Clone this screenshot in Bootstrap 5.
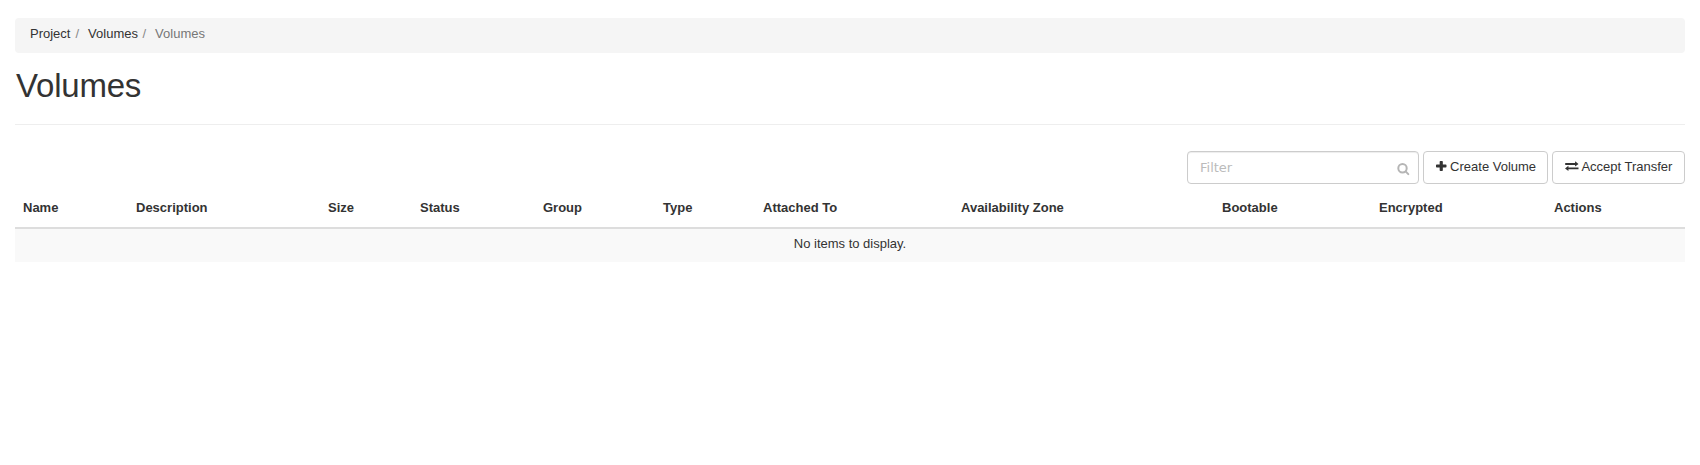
<!DOCTYPE html>
<html lang="en">
<head>
<meta charset="utf-8">
<meta name="viewport" content="width=device-width, initial-scale=1">
<title>Volumes</title>
<link href="https://cdn.jsdelivr.net/npm/bootstrap@5.3.0/dist/css/bootstrap.min.css" rel="stylesheet">
<style>
body { font-family: "Liberation Sans", sans-serif; font-size: 13px; line-height: 1.428571; color: #333; background: #fff; }
.page-wrap { padding: 18px 15px 0; }
.breadcrumb { --bs-breadcrumb-font-size: 13px; background: #f5f5f5; border-radius: 4px; padding: 8px 15px; height: 35px; margin-bottom: 0; line-height: 16px; }
.breadcrumb a { color: #333; text-decoration: none; }
.breadcrumb-item + .breadcrumb-item { padding-left: 5px; }
.breadcrumb-item + .breadcrumb-item::before { color: #888; padding-right: 9px; }
.breadcrumb-item + .breadcrumb-item.active { color: #777; padding-left: 4.5px; }
.page-title { font-size: 33px; line-height: 36px; font-weight: 400; letter-spacing: -.2px; margin: 0; padding: 15px 0 20px 1px; height: 72px; border-bottom: 1px solid #eee; }
.toolbar { margin-top: 26px; gap: 4px; height: 33px; }
.filter-box { width: 232px; }
.filter-box .form-control { font: 13px/18px "DejaVu Sans", sans-serif; height: 33px; padding: 6px 12px; border: 1px solid #ccc; border-radius: 4px; box-shadow: inset 0 1px 1px rgba(0,0,0,.075); }
.filter-box .form-control::placeholder { color: #bbb; opacity: 1; }
.filter-box svg { position: absolute; right: 9px; top: 12px; }
.btn-plain { --bs-btn-font-size: 13px; --bs-btn-color: #333; --bs-btn-border-color: #ccc; --bs-btn-bg: #fff; --bs-btn-border-radius: 4px; --bs-btn-line-height: 18px; --bs-btn-padding-x: 12px; height: 33px; padding: 4px 0 6px 12px; text-align: left; white-space: nowrap; }
.btn-plain svg { display: inline-block; vertical-align: 0; }
.create-btn { width: 125px; }
.accept-btn { width: 133px; }
.volume-table { table-layout: fixed; margin: 6px 0 0; color: #333; }
.volume-table > thead > tr > th { height: 38px; padding: 8px 8px 10px; border-bottom: 2px solid #ddd; line-height: 18px; white-space: nowrap; }
.volume-table > tbody > tr > td { height: 34px; padding: 6px 8px 9px; border: 0; background: #f9f9f9; line-height: 18px; }
</style>
</head>
<body>
<main class="page-wrap">
  <nav aria-label="breadcrumb">
    <ol class="breadcrumb">
      <li class="breadcrumb-item"><a href="#">Project</a></li>
      <li class="breadcrumb-item"><a href="#">Volumes</a></li>
      <li class="breadcrumb-item active" aria-current="page">Volumes</li>
    </ol>
  </nav>
  <h1 class="page-title">Volumes</h1>
  <div class="toolbar d-flex justify-content-end">
    <div class="filter-box position-relative">
      <input class="form-control" type="text" placeholder="Filter" aria-label="Filter">
      <svg width="13" height="13" viewBox="0 0 13 13" fill="none" stroke="#b5b5b5" stroke-width="2"><circle cx="5.500" cy="5.300" r="4.200"/><path d="M8.600 8.400l2.700 2.700" stroke-linecap="round"/></svg>
    </div>
    <button type="button" class="btn btn-plain create-btn"><svg width="10.500" height="10" viewBox="0 0 10 10" preserveAspectRatio="none" fill="#333"><path d="M3.500.7q0-.7.7-.7h1.600q.7 0 .7.7v2.800h2.800q.7 0 .7.7v1.600q0 .7-.7.7H6.500v2.800q0 .7-.7.7H4.200q-.7 0-.7-.7V6.500H.7q-.7 0-.7-.7V4.200q0-.7.7-.7h2.800z"/></svg> Create Volume</button>
    <button type="button" class="btn btn-plain accept-btn"><svg width="13.500" height="10" viewBox="0.300 0 13 10" preserveAspectRatio="none" fill="#333"><path d="M.5 2H10V.2l3.300 2.700L10 5.600V3.900H.5zM13.300 6.500H3.600V4.800L.3 7.400l3.300 2.500V8.300h9.700z"/></svg> Accept Transfer</button>
  </div>
  <table class="table volume-table">
    <colgroup>
      <col style="width:113px"><col style="width:192px"><col style="width:92px"><col style="width:123px"><col style="width:120px"><col style="width:100px"><col style="width:198px"><col style="width:261px"><col style="width:157px"><col style="width:175px"><col style="width:139px">
    </colgroup>
    <thead>
      <tr><th>Name</th><th>Description</th><th>Size</th><th>Status</th><th>Group</th><th>Type</th><th>Attached To</th><th>Availability Zone</th><th>Bootable</th><th>Encrypted</th><th>Actions</th></tr>
    </thead>
    <tbody>
      <tr><td colspan="11" class="text-center">No items to display.</td></tr>
    </tbody>
  </table>
</main>
<script src="https://cdn.jsdelivr.net/npm/bootstrap@5.3.0/dist/js/bootstrap.bundle.min.js"></script>
</body>
</html>
